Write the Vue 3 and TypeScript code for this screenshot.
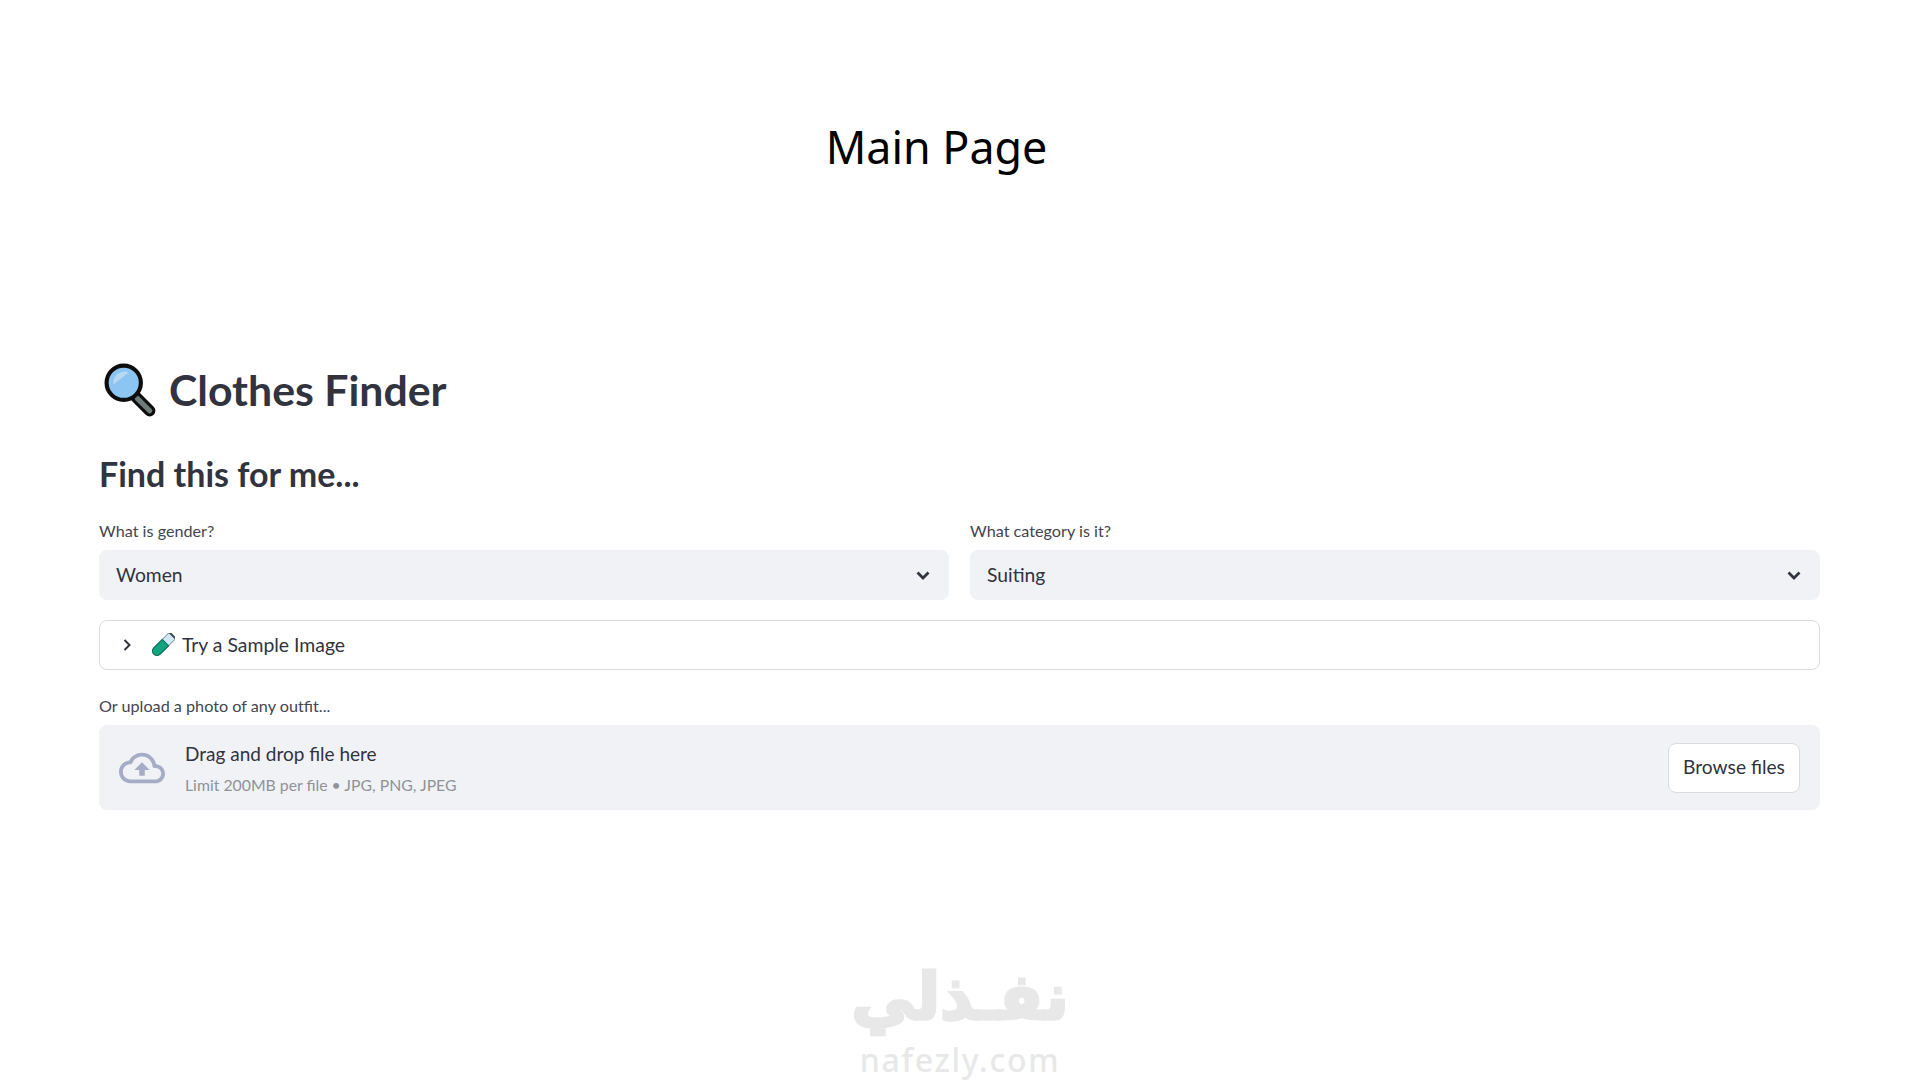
<template>
  <div class="page">
    <h1 class="page-title">Main Page</h1>

    <main class="content">
      <h2 class="app-title">
        <svg class="lens" viewBox="0 0 52 52" aria-hidden="true">
          <path d="M31 33 L44 46" stroke="#0d0d0d" stroke-width="11" stroke-linecap="round" />
          <path d="M32 34 L44 46" stroke="#6f7b78" stroke-width="5" stroke-linecap="round" />
          <circle cx="19" cy="19" r="16.5" fill="#8cc4f2" stroke="#0d0d0d" stroke-width="4" />
          <path d="M9 21 A11 11 0 0 1 24 9 Z" fill="#b7d9f5" />
        </svg>
        <span>Clothes Finder</span>
      </h2>

      <h3 class="subtitle">Find this for me...</h3>

      <div class="selects">
        <div v-for="field in fields" :key="field.label" class="field">
          <label class="label">{{ field.label }}</label>
          <div class="select">
            <span>{{ field.value }}</span>
            <svg class="chevron" viewBox="0 0 14 9" aria-hidden="true">
              <path d="M1.5 1.5 L7 7 L12.5 1.5" fill="none" stroke="#31333f" stroke-width="2.8" />
            </svg>
          </div>
        </div>
      </div>

      <div class="expander">
        <svg class="arrow" viewBox="0 0 10 14" aria-hidden="true">
          <path d="M2.5 2 L7.5 7 L2.5 12" fill="none" stroke="#31333f" stroke-width="2" />
        </svg>
        <svg class="tube" viewBox="0 0 24 24" aria-hidden="true">
          <g transform="rotate(45 12 12)">
            <path d="M7.5 -1 H16.5 V20.5 A4.5 4.5 0 0 1 7.5 20.5 Z" fill="#cfe8f3" stroke="#5b6b70" stroke-width="0.8" />
            <path d="M7.5 8.5 H16.5 V20.5 A4.5 4.5 0 0 1 7.5 20.5 Z" fill="#12a37f" stroke="#0b6d57" stroke-width="1" />
            <path d="M6 -1.5 H18" stroke="#3f4a4f" stroke-width="2" stroke-linecap="round" />
          </g>
        </svg>
        <span class="expander-text">Try a Sample Image</span>
      </div>

      <label class="label upload-label">Or upload a photo of any outfit...</label>
      <div class="dropzone">
        <svg class="cloud" viewBox="0 0 24 24" aria-hidden="true">
          <path d="M19.35 10.04C18.67 6.59 15.64 4 12 4 9.11 4 6.6 5.64 5.35 8.04 2.34 8.36 0 10.91 0 14c0 3.31 2.69 6 6 6h13c2.76 0 5-2.24 5-5 0-2.64-2.05-4.78-4.65-4.96zM19 18H6c-2.21 0-4-1.79-4-4 0-2.05 1.53-3.76 3.56-3.97l1.07-.11.5-.95C8.08 7.14 9.94 6 12 6c2.62 0 4.88 1.86 5.39 4.43l.3 1.5 1.53.11c1.56.1 2.78 1.41 2.78 2.96 0 1.65-1.35 3-3 3zM8 13h2.55v3h2.9v-3H16l-4-4z" />
        </svg>
        <div class="drop-text">
          <div class="drop-main">Drag and drop file here</div>
          <div class="drop-hint">Limit 200MB per file • JPG, PNG, JPEG</div>
        </div>
        <button class="browse" type="button">Browse files</button>
      </div>
    </main>

    <div class="watermark">
      <div class="wm-ar" dir="rtl">نفـذلي</div>
      <div class="wm-en">nafezly.com</div>
    </div>
  </div>
</template>

<script setup lang="ts">
interface Field {
  label: string
  value: string
}

const fields: Field[] = [
  { label: 'What is gender?', value: 'Women' },
  { label: 'What category is it?', value: 'Suiting' },
]
</script>

<style>
html, body {
  margin: 0;
  background: #fff;
}
</style>

<style scoped>
.page {
  position: relative;
  height: 1080px;
  overflow: hidden;
  box-sizing: border-box;
  padding: 111px 100px 0 99px;
  font-family: Lato, "Noto Sans", sans-serif;
  color: #31333f;
}
.page-title {
  margin: 0;
  height: 72px;
  padding-right: 46px;
  line-height: 72px;
  text-align: center;
  font-family: "Noto Sans", sans-serif;
  font-size: 44.8px;
  font-weight: 400;
  color: #000;
}
.content {
  padding-top: 172px;
}
.app-title {
  display: flex;
  align-items: center;
  gap: 11px;
  margin: 0;
  height: 68px;
  font-size: 42.8px;
  font-weight: 700;
}
.lens {
  width: 54px;
  height: 54px;
  margin: 2px 0 0 5px;
}
.subtitle {
  margin: 0;
  padding-top: 28px;
  height: 46px;
  line-height: 46px;
  font-size: 34px;
  font-weight: 700;
}
.selects {
  display: grid;
  grid-template-columns: 1fr 1fr;
  gap: 21px;
  margin-top: 22px;
}
.label {
  display: block;
  height: 31px;
  line-height: 23px;
  font-size: 16.2px;
  color: #43454f;
}
.select {
  display: flex;
  align-items: center;
  justify-content: space-between;
  height: 50px;
  padding: 0 19px 0 17px;
  border-radius: 8px;
  background: #f0f2f6;
  font-size: 19.3px;
}
.select span {
  margin-top: -2px;
}
.chevron {
  width: 14px;
  height: 9px;
}
.expander {
  display: flex;
  align-items: center;
  box-sizing: border-box;
  height: 50px;
  margin-top: 20px;
  padding-left: 22px;
  border: 1px solid #d9dbe0;
  border-radius: 8px;
  font-size: 19.4px;
}
.expander-text {
  margin-top: -2px;
}
.arrow {
  width: 10px;
  height: 14px;
}
.tube {
  width: 24px;
  height: 24px;
  margin: 0 7px 0 19px;
}
.upload-label {
  margin-top: 24px;
  height: 31px;
}
.dropzone {
  display: flex;
  align-items: center;
  box-sizing: border-box;
  height: 85px;
  padding: 0 20px;
  border-radius: 8px;
  background: #f0f2f6;
}
.cloud {
  width: 46px;
  height: 46px;
  fill: #a5adc6;
}
.drop-text {
  flex: 1;
  margin-left: 20px;
}
.drop-main {
  height: 33px;
  line-height: 25px;
  font-size: 19px;
}
.drop-hint {
  line-height: 21px;
  font-size: 15.8px;
  color: #8f9299;
}
.browse {
  width: 132px;
  height: 50px;
  padding: 0 0 2px;
  border: 1px solid #d9dbe0;
  border-radius: 8px;
  background: #fff;
  font: inherit;
  font-size: 19.2px;
  color: #31333f;
}
.watermark {
  position: absolute;
  left: 800px;
  top: 952px;
  width: 320px;
  text-align: center;
  color: #e8e8e8;
}
.wm-ar {
  height: 90px;
  line-height: 90px;
  font-family: "DejaVu Sans", sans-serif;
  font-size: 64px;
  font-weight: 700;
  -webkit-text-stroke: 3px #e8e8e8;
}
.wm-en {
  line-height: 36px;
  font-family: "Noto Sans", sans-serif;
  font-size: 32px;
  font-weight: 500;
  letter-spacing: 1.7px;
}
</style>
